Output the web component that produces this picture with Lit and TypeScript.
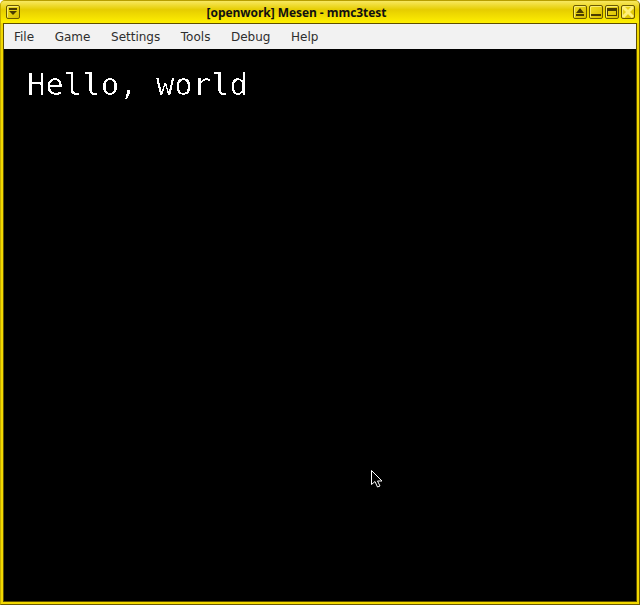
import { LitElement, html, css } from "lit";
import { customElement } from "lit/decorators.js";

@customElement("app-root")
export class AppRoot extends LitElement {
  static styles = css`
    :host { display: block; width: 640px; height: 605px; overflow: hidden; background: #fff; }
    .window {
      box-sizing: border-box; width: 640px; height: 605px; display: flex; flex-direction: column;
      background: #f2d800; border: 1px solid #6b5a00; border-top-color: #b89e00; border-left-color: #c7ae00; border-radius: 5px 5px 0 0;
      padding: 0 2px 2px 2px; overflow: hidden;
    }
    .title {
      flex: none; height: 22px; margin: 0 -2px; padding: 0 4px 0 5px; display: flex; align-items: center;
      background: linear-gradient(#f8e860 0, #e6cd00 40%, #fff000 100%);
      position: relative;
    }
    .title-text {
      position: absolute; left: 0; right: 47px; top: 0; bottom: 0; display: flex; align-items: center; justify-content: center;
      font: bold 12px "Open Sans", "Noto Sans", sans-serif; letter-spacing: -0.05px; color: #111;
    }
    .btn {
      box-sizing: border-box; width: 14px; height: 14px; border: 1px solid #6b5a00; border-radius: 2px;
      background: linear-gradient(135deg, #f0dc20, #d9bf00); box-shadow: inset 1px 1px #f8ec70;
      display: flex; align-items: center; justify-content: center; position: relative; z-index: 1;
    }
    .btn svg { display: block; }
    .spacer { flex: 1; }
    .btns { display: flex; gap: 2px; position: relative; z-index: 1; }
    .body { flex: 1; display: flex; flex-direction: column; border: 1px solid #5e4f00; min-height: 0; }
    .menu {
      flex: none; height: 25px; background: #f2f2f2; display: flex; align-items: center; gap: 20.6px; padding-left: 10px;
      font: 12px "DejaVu Sans", sans-serif; color: #2e2e2e;
    }
    .screen { flex: 1; background: #000; position: relative; }
    .hello {
      position: absolute; left: 23px; top: 14px; color: #fff; white-space: pre;
      font: 30.6px/44px "DejaVu Sans Mono", monospace; filter: url(#hard);
    }
    .cursor { position: absolute; left: 366px; top: 420px; }
    .defs { position: absolute; width: 0; height: 0; }
  `;

  render() {
    return html`
      <svg class="defs"><filter id="hard" x="0" y="0" width="100%" height="100%" color-interpolation-filters="sRGB">
        <feComponentTransfer><feFuncA type="discrete" tableValues="0 0 0 1"></feFuncA></feComponentTransfer>
      </filter></svg>
      <div class="window">
        <div class="title">
          <div class="title-text">[openwork] Mesen - mmc3test</div>
          <div class="btn"><svg width="10" height="10" fill="#4a3c00"><path d="M1 1h8v2H1zM1 4h8L5 8z"/></svg></div>
          <div class="spacer"></div>
          <div class="btns">
            <div class="btn"><svg width="10" height="10" fill="#4a3c00"><path d="M5 1l4 5H1zM1 7h8v2H1z"/></svg></div>
            <div class="btn"><svg width="10" height="10" fill="#4a3c00"><path d="M0 7h10v2H0z"/></svg></div>
            <div class="btn"><svg width="10" height="10" fill="#4a3c00"><path d="M0 1h10v8H0zM1 4v4h8V4z" fill-rule="evenodd"/></svg></div>
            <div class="btn"><svg width="12" height="12" stroke="#fff07a" stroke-width="3"><path d="M1 1l10 10M11 1l-10 10"/></svg></div>
          </div>
        </div>
        <div class="body">
          <div class="menu"><span>File</span><span>Game</span><span>Settings</span><span>Tools</span><span>Debug</span><span>Help</span></div>
          <div class="screen">
            <div class="hello">Hello, world</div>
            <svg class="cursor" width="14" height="20"><path d="M1.500 1.500v14l3.500-3 2.500 5.500 2.500-1-2.500-5h4.500z" fill="#000" stroke="#fff" stroke-width="1"/></svg>
          </div>
        </div>
      </div>
    `;
  }
}
